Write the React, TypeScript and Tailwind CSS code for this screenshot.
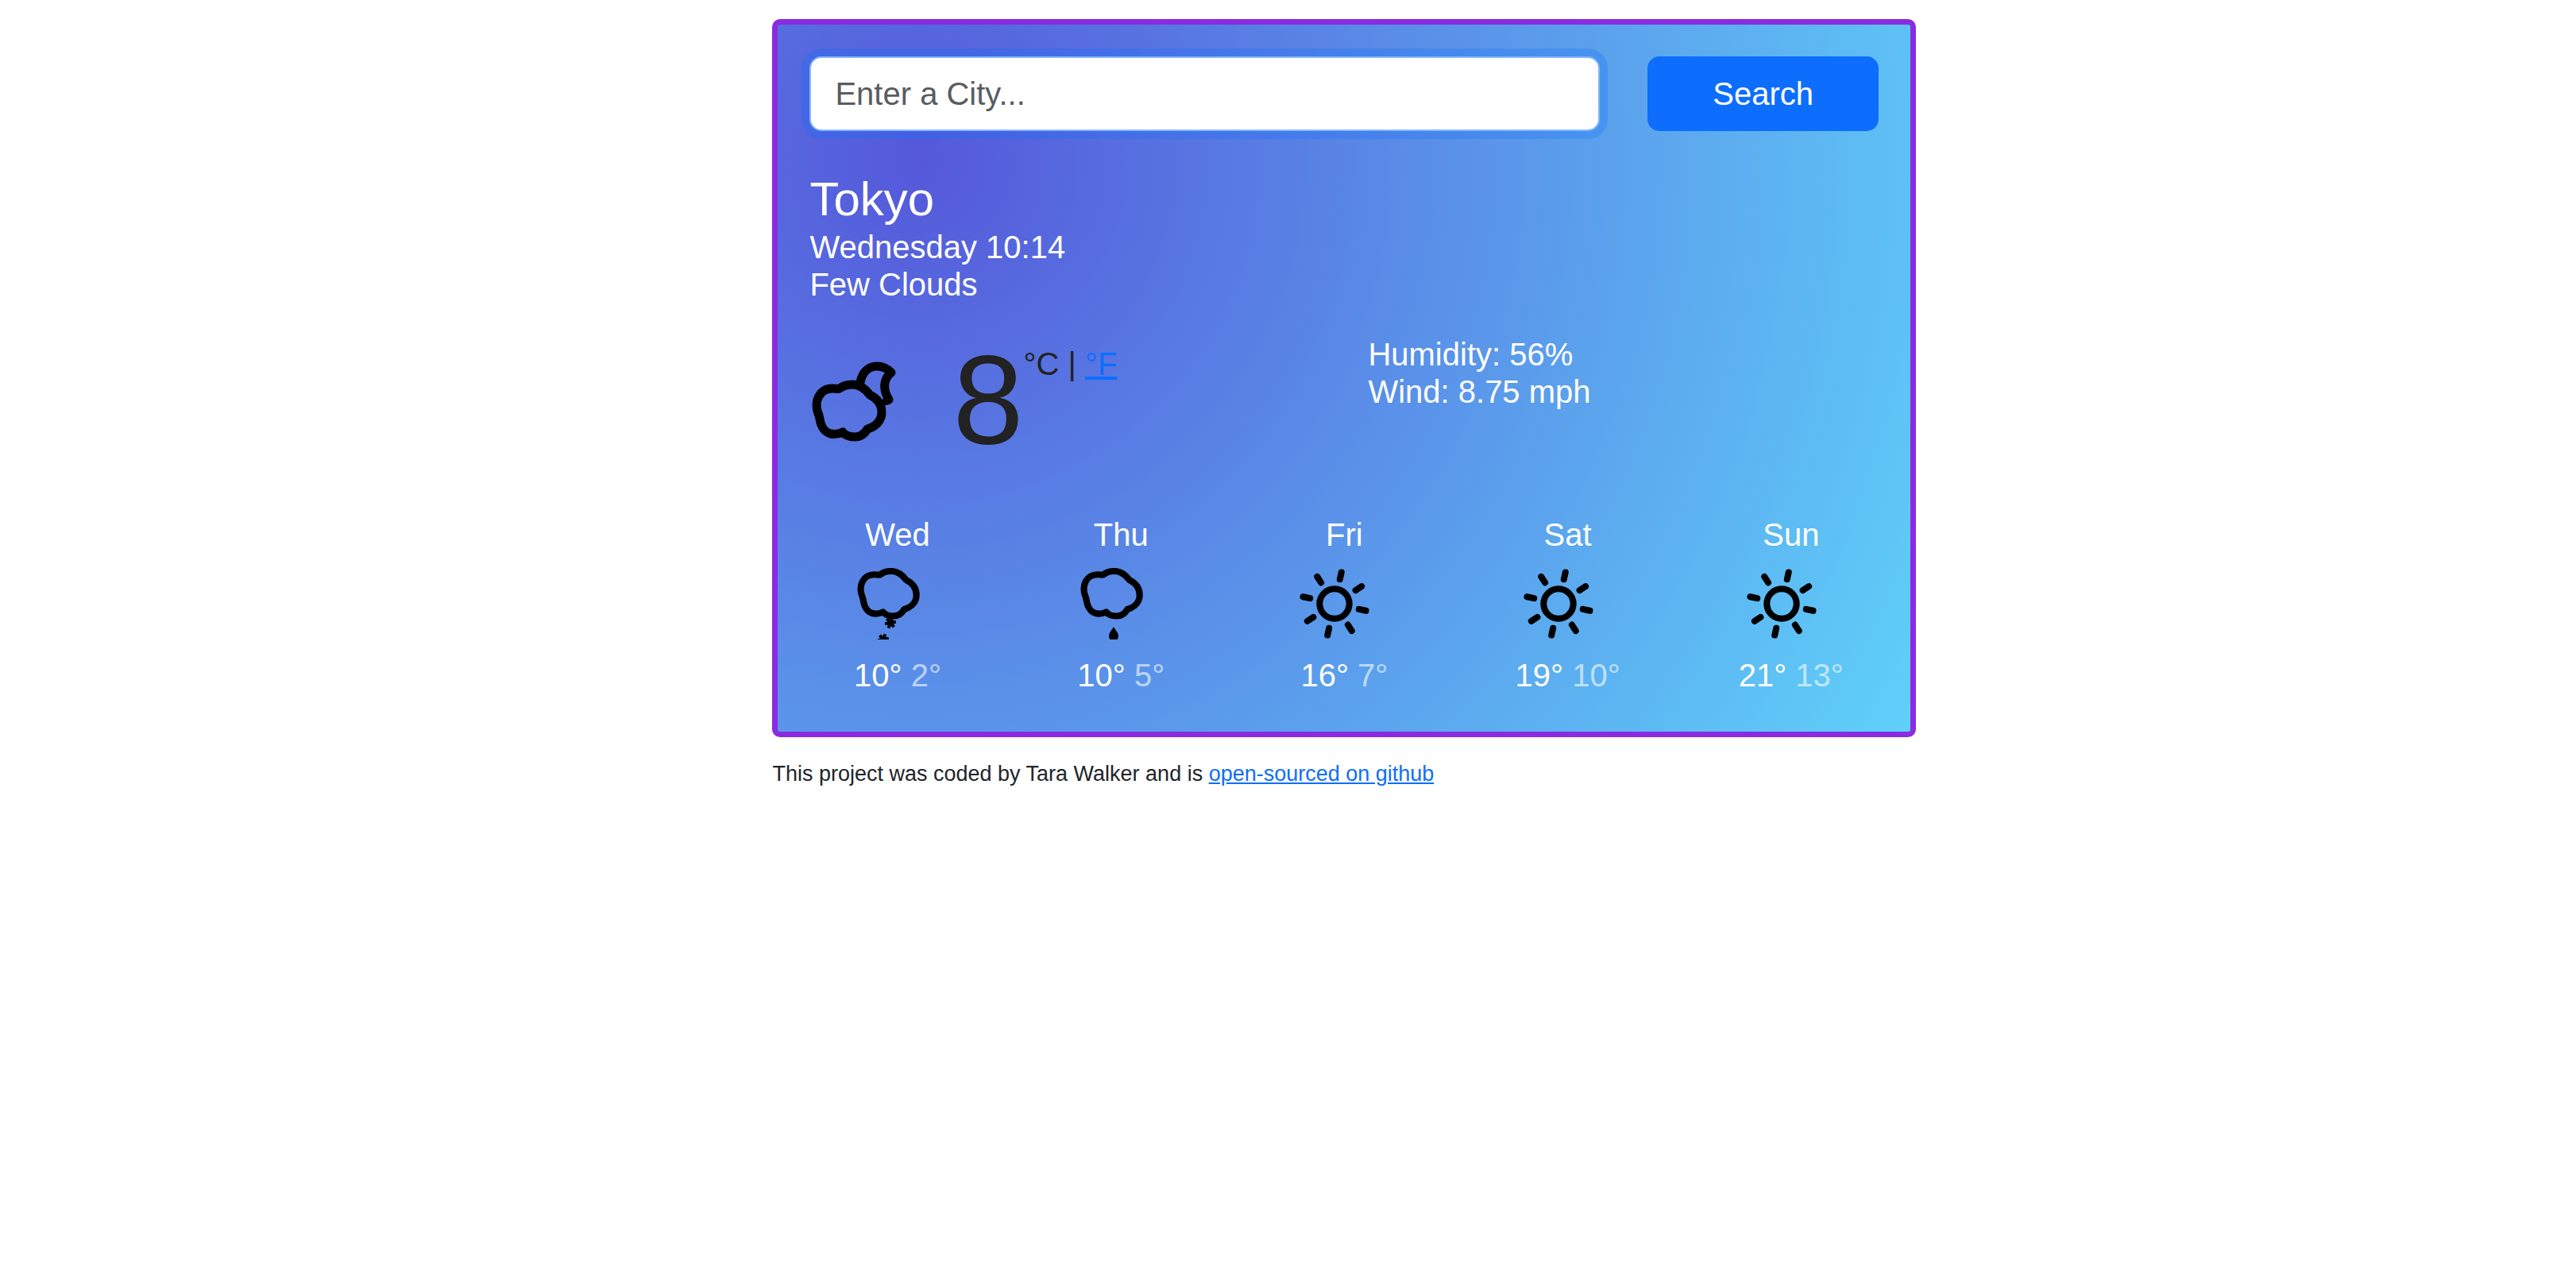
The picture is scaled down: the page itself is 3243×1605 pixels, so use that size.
import React from "react";

type Kind = "snow" | "rain" | "sun";

const forecast: { day: string; kind: Kind; high: number; low: number }[] = [
  { day: "Wed", kind: "snow", high: 10, low: 2 },
  { day: "Thu", kind: "rain", high: 10, low: 5 },
  { day: "Fri", kind: "sun", high: 16, low: 7 },
  { day: "Sat", kind: "sun", high: 19, low: 10 },
  { day: "Sun", kind: "sun", high: 21, low: 13 },
];

const labels: Record<Kind, string> = { snow: "Snow", rain: "Rain", sun: "Clear sky" };

const rays = [12.5, 57.5, 102.5, 147.5, 192.5, 237.5, 282.5, 327.5];

const cloud =
  "M42 43C47 39 53 38 58 38C67 38 74 43 80 51C90 56 95 64 95 73C95 83 88 91 77 94C73 101 68 104 61 104C54 104 49 102 46 98C35 103 24 101 19 89C17 84 17 80 16 77C8 58 18 43 33 43C37 43 40 44 42 43Z";

const flake = "M0 -7V7M-6 -3.5L6 3.5M-6 3.5L6 -3.5";

function NightCloudIcon() {
  return (
    <svg
      viewBox="4 1 120 120"
      className="mt-6 size-[120px] shrink-0"
      fill="none"
      stroke="#000"
      strokeWidth="11"
      strokeLinejoin="round"
      role="img"
      aria-label="Few clouds"
    >
      <path d="M68 36C70 22 79 15 89 15C97 15 102 18 107 23C97 31 96 44 104 57Q100 60 96 57" />
      <path d={cloud} />
    </svg>
  );
}

function ForecastIcon({ kind }: { kind: Kind }) {
  return (
    <svg viewBox="0 0 90 90" className="size-[90px] overflow-hidden" fill="none" stroke="#000" role="img" aria-label={labels[kind]}>
      {kind === "sun" ? (
        <g strokeWidth="8" strokeLinecap="round">
          <circle cx="45" cy="45" r="18.7" />
          {rays.map((a) => (
            <path key={a} d="M45 13.5V4.5" transform={`rotate(${a} 45 45)`} />
          ))}
        </g>
      ) : (
        <path d={cloud} strokeWidth="9.5" strokeLinejoin="round" transform="translate(-0.7 -28.6) scale(0.857)" />
      )}
      {kind === "snow" && (
        <g strokeWidth="4">
          <path d={flake} transform="translate(48 69) rotate(20)" />
          <path d={flake} transform="translate(39 90) rotate(20)" />
        </g>
      )}
      {kind === "rain" && (
        <path fill="#000" stroke="none" d="M48 74C50 78 54 81 54 86A6 6 0 0 1 42 86C42 81 46 78 48 74Z" />
      )}
    </svg>
  );
}

export default function App() {
  return (
    <div className="min-h-screen bg-white pt-6 font-['Liberation_Sans',Arial,sans-serif] text-[#212529]">
      <div className="ml-[29.985%] w-full max-w-[1440px]">
        <main className="rounded-[10px] border-[7px] border-[#8a2be2] bg-[radial-gradient(circle_at_12.3%_19.3%,rgb(85,88,218)_0%,rgb(95,209,249)_100.2%)] px-10 pt-10 pb-[47px] text-[40px] leading-[47px] text-white">
          <form className="grid grid-cols-4 gap-[60px]" onSubmit={(e) => e.preventDefault()}>
            <input
              type="search"
              aria-label="City"
              placeholder="Enter a City..."
              className="col-span-3 h-[94px] min-w-0 rounded-[15px] border-2 border-[#86b7fe] bg-white px-[30px] text-[#212529] shadow-[0_0_0_10px_rgba(13,110,253,0.25)] outline-none placeholder:text-[#595c5f]"
            />
            <button type="submit" className="h-[94px] rounded-[15px] bg-[#0d6efd]">
              Search
            </button>
          </form>

          <h1 className="mt-12 text-[60px] leading-[75px]">Tokyo</h1>
          <p>Wednesday 10:14</p>
          <p>Few Clouds</p>

          <div className="mt-[41px] grid grid-cols-2 gap-[60px]">
            <div className="flex items-start text-[#222]">
              <NightCloudIcon />
              <span className="ml-[60px] text-[160px] leading-[160px]">8</span>
              <span className="mt-3">
                °C |{" "}
                <a href="#fahrenheit" className="text-[#0d6efd] underline">
                  °F
                </a>
              </span>
            </div>
            <div>
              <p>Humidity: 56%</p>
              <p>Wind: 8.75 mph</p>
            </div>
          </div>

          <div className="mt-[67px] grid grid-cols-5 gap-[60px] text-center">
            {forecast.map((f) => (
              <div key={f.day} className="flex flex-col items-center whitespace-nowrap">
                <h2>{f.day}</h2>
                <div className="mt-[18px] pr-6">
                  <ForecastIcon kind={f.kind} />
                </div>
                <p className="mt-[22px]">
                  {f.high}° <span className="opacity-60">{f.low}°</span>
                </p>
              </div>
            ))}
          </div>
        </main>
        <footer className="mt-6 text-[27px] leading-[44px]">
          This project was coded by Tara Walker and is{" "}
          <a href="#github" className="text-[#0d6efd] underline">
            open-sourced on github
          </a>
        </footer>
      </div>
    </div>
  );
}
